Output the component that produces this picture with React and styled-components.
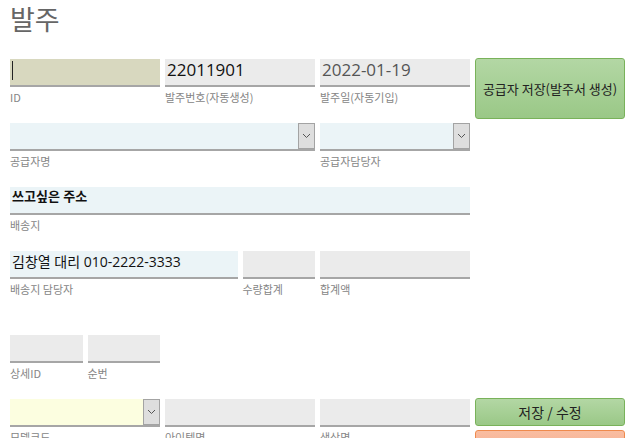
import React from "react";
import styled, { createGlobalStyle } from "styled-components";

const GlobalStyle = createGlobalStyle`
  html, body {
    margin: 0;
    padding: 0;
    overflow: hidden;
    background: #fff;
    font-family: "Open Sans", "Noto Sans CJK KR", sans-serif;
  }
`;

const Page = styled.div`
  padding: 0 10px;
`;

const Title = styled.h1`
  margin: 0;
  padding-top: 1px;
  height: 58px;
  font-size: 27px;
  line-height: 36px;
  font-weight: 400;
  color: #666;
  font-family: "Noto Sans CJK KR", sans-serif;
`;

const Grid = styled.div`
  display: grid;
  grid-template-columns: repeat(8, 72.5px);
  grid-template-rows: 64px 64px 64px 84px 64px 64px;
  column-gap: 5px;
  align-items: start;
`;

const FieldBox = styled.div`
  grid-column: ${({ $start }) => ($start ? `${$start} / ` : "")}span ${({ $span }) => $span || 2};
  display: flex;
  flex-direction: column;
`;

const bgs = {
  gray: "#ebebeb",
  blue: "#ebf4f7",
  id: "#d8d8bf",
  yellow: "#fcfee0",
};

const sizes = {
  big: { font: "17px", weight: 400, line: "22px" },
  mid: { font: "14px", weight: 400, line: "22px" },
  small: { font: "13px", weight: 600, line: "18px" },
};

const InputWrap = styled.div`
  position: relative;
  height: 26px;
  background: ${({ $bg }) => bgs[$bg] || bgs.gray};
  border-bottom: 2px solid #a6a6a6;
  display: flex;
  align-items: flex-start;
`;

const Value = styled.div`
  flex: 1;
  padding: 0 2px;
  font-size: ${({ $size }) => sizes[$size].font};
  font-weight: ${({ $size }) => sizes[$size].weight};
  line-height: ${({ $size }) => sizes[$size].line};
  color: ${({ $muted }) => ($muted ? "#555" : "#111")};
  white-space: nowrap;
  overflow: hidden;
`;

const Caret = styled.span`
  position: absolute;
  left: 2px;
  top: 2px;
  width: 1px;
  height: 19px;
  background: #222;
`;

const DropButton = styled.div`
  width: 15px;
  height: 24px;
  margin-left: auto;
  background: #dedede;
  border: 1px solid #a3a3a3;
  display: flex;
  align-items: center;
  justify-content: center;
`;

const Label = styled.div`
  margin-top: 3px;
  font-size: 11px;
  line-height: 15px;
  color: #858585;
  font-family: "Noto Sans CJK KR", sans-serif;
  white-space: nowrap;
`;

const SideButton = styled.button`
  grid-column: ${({ $start }) => $start} / span 2;
  grid-row: ${({ $rows }) => $rows || "auto"};
  height: ${({ $h }) => $h}px;
  margin-top: -1px;
  border-radius: 3px;
  border: 1px solid #79b25a;
  background: linear-gradient(#b3d7a4, #9ac887);
  color: #222;
  font-size: 13px;
  font-family: "Noto Sans CJK KR", sans-serif;
  cursor: pointer;
  padding: 0;
`;

const ButtonStack = styled.div`
  grid-column: 7 / span 2;
  display: flex;
  flex-direction: column;
  gap: 4px;
  margin-top: -1px;
`;

const StackButton = styled.button`
  height: 28px;
  border-radius: 3px;
  border: 1px solid ${({ $tone }) => ($tone === "orange" ? "#ef8a4c" : "#79b25a")};
  background: ${({ $tone }) =>
    $tone === "orange" ? "linear-gradient(#f9bda1, #f6ad8c)" : "linear-gradient(#b3d7a4, #9ac887)"};
  color: #222;
  font-size: 14px;
  font-family: "Noto Sans CJK KR", sans-serif;
  padding: 0;
`;

const Chevron = () => (
  <svg width="9" height="6" viewBox="0 0 9 6">
    <path d="M1 1 L4.5 4.5 L8 1" fill="none" stroke="#555" strokeWidth="1" />
  </svg>
);

const Field = ({ label, value, bg, span, start, select, size = "big", muted, caret }) => (
  <FieldBox $span={span} $start={start}>
    <InputWrap $bg={bg}>
      {caret && <Caret />}
      <Value $size={size} $muted={muted}>{value}</Value>
      {select && (
        <DropButton>
          <Chevron />
        </DropButton>
      )}
    </InputWrap>
    <Label>{label}</Label>
  </FieldBox>
);

export default function App() {
  return (
    <Page>
      <GlobalStyle />
      <Title>발주</Title>
      <Grid>
        <Field label="ID" bg="id" caret start={1} />
        <Field label="발주번호(자동생성)" value="22011901" />
        <Field label="발주일(자동기입)" value="2022-01-19" muted />
        <SideButton $start={7} $rows="1 / span 2" $h={61}>
          공급자 저장(발주서 생성)
        </SideButton>

        <Field label="공급자명" bg="blue" span={4} start={1} select />
        <Field label="공급자담당자" bg="blue" select />

        <Field label="배송지" bg="blue" span={6} start={1} value="쓰고싶은 주소" size="small" />

        <Field label="배송지 담당자" bg="blue" span={3} start={1} value="김창열 대리 010-2222-3333" size="mid" />
        <Field label="수량합계" span={1} />
        <Field label="합계액" />

        <Field label="상세ID" span={1} start={1} />
        <Field label="순번" span={1} />

        <Field label="모델코드" bg="yellow" start={1} select />
        <Field label="아이템명" />
        <Field label="색상명" />
        <ButtonStack>
          <StackButton>저장 / 수정</StackButton>
          <StackButton $tone="orange">삭제</StackButton>
        </ButtonStack>
      </Grid>
    </Page>
  );
}
